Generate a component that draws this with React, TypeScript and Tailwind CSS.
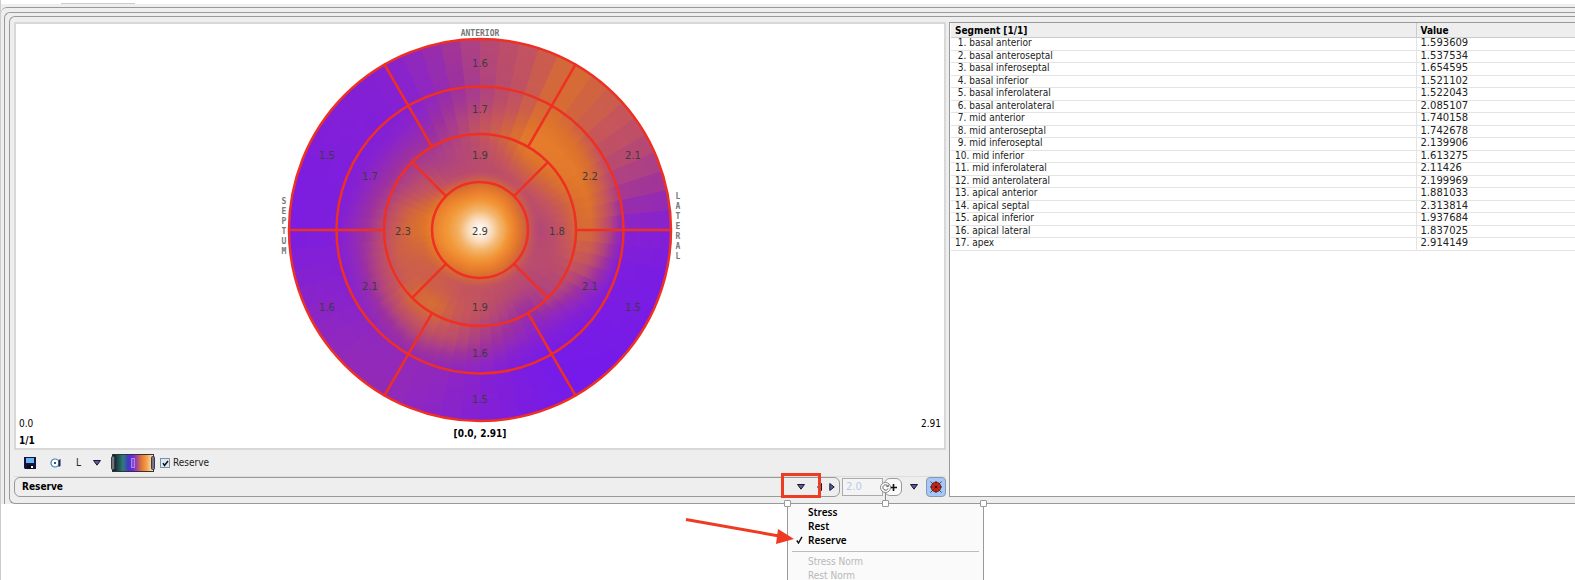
import React, { useState } from 'react';

const SEGMENTS = [
  { name: 'basal anterior', value: '1.593609' },
  { name: 'basal anteroseptal', value: '1.537534' },
  { name: 'basal inferoseptal', value: '1.654595' },
  { name: 'basal inferior', value: '1.521102' },
  { name: 'basal inferolateral', value: '1.522043' },
  { name: 'basal anterolateral', value: '2.085107' },
  { name: 'mid anterior', value: '1.740158' },
  { name: 'mid anteroseptal', value: '1.742678' },
  { name: 'mid inferoseptal', value: '2.139906' },
  { name: 'mid inferior', value: '1.613275' },
  { name: 'mid inferolateral', value: '2.11426' },
  { name: 'mid anterolateral', value: '2.199969' },
  { name: 'apical anterior', value: '1.881033' },
  { name: 'apical septal', value: '2.313814' },
  { name: 'apical inferior', value: '1.937684' },
  { name: 'apical lateral', value: '1.837025' },
  { name: 'apex', value: '2.914149' },
];

// Colour table, from low to high reserve
const PALETTE = [
  [117, 26, 234],
  [132, 32, 212],
  [144, 40, 190],
  [156, 48, 160],
  [172, 64, 134],
  [186, 76, 108],
  [198, 86, 90],
  [208, 100, 64],
  [222, 116, 42],
  [236, 130, 46],
  [242, 152, 56],
  [244, 182, 110],
  [250, 226, 200],
  [255, 255, 255],
];

const RADII = [0, 12, 24, 36, 46, 58, 72, 86, 98, 112, 128, 144, 191];

// Palette index per radius (from 46 outwards), one row every 15 degrees, clockwise from the top
const SAMPLES = [
  [7.6, 5, 5, 5.2, 5.8, 5.2, 4.2, 4, 4.5],
  [7.6, 5, 5.6, 6.4, 7.2, 6.6, 5.8, 5.5, 5.7],
  [7.6, 5.2, 6.5, 7.8, 8.6, 8.5, 8, 7.7, 7.6],
  [7.4, 5.4, 6.8, 7.9, 8.4, 8.5, 7.8, 6.6, 6.5],
  [7, 5, 6.2, 7.4, 8.2, 8.4, 7.4, 5.2, 5],
  [6.8, 4.8, 5.6, 6.6, 7.6, 8, 6.2, 3.5, 3.3],
  [6.8, 4.4, 5, 6.2, 7.4, 7.4, 4.8, 1.2, 0.9],
  [6.8, 4.8, 4.9, 5.6, 6.4, 5.8, 3.2, 0.5, 0.3],
  [7, 5, 4.9, 4.8, 5, 3.4, 1.6, 0.4, 0.2],
  [7.2, 5, 4.6, 4.2, 4, 2.2, 0.8, 0.2, 0],
  [7.4, 5.2, 4.6, 3.2, 2.6, 1.6, 0.7, 0.1, 0],
  [7.6, 5.4, 5, 4.2, 3.4, 2.6, 1.2, 0.5, 0.4],
  [7.6, 5.6, 5.6, 5.4, 4.4, 3.6, 2.4, 1.2, 1],
  [7.8, 5.8, 6, 6.2, 5.8, 5, 3.2, 2, 1.6],
  [7.8, 6.2, 6.6, 7.6, 7.2, 5.8, 3.8, 2.2, 2.2],
  [8.2, 6.6, 6.6, 7.2, 7.2, 5.4, 3, 2, 2.2],
  [8.6, 7, 6.6, 6.4, 5.8, 4.4, 2.4, 1.4, 1.8],
  [8.8, 7.4, 7, 6.6, 5.4, 3.8, 2, 1, 1.2],
  [8.9, 7.9, 7.4, 6.2, 4.8, 3.2, 2, 0.7, 0.4],
  [8.8, 7.8, 7, 5.6, 4, 2.8, 1.4, 0.6, 0.5],
  [8.6, 7, 5.6, 4.4, 3.4, 2.4, 1.2, 0.7, 0.8],
  [8.2, 5.8, 5, 4, 3.4, 2.4, 1.2, 0.8, 0.9],
  [7.6, 5, 4.2, 3.8, 3.2, 2.4, 1.5, 1.1, 1.2],
  [7.4, 4.8, 4.6, 4.4, 4, 3.6, 3, 2.4, 2.6],
].map((row) => [12.9, 11.8, 10.6, (9.8 + row[0]) / 2 + 0.4, ...row]);

const MAP_RADIUS = 191;
const WEDGE = 6;

const mix = (a: number, b: number, t: number) => a + (b - a) * t;

function colorAt(index: number) {
  const i = Math.min(Math.floor(index), PALETTE.length - 2);
  const rgb = PALETTE[i].map((c, k) => Math.round(mix(c, PALETTE[i + 1][k], index - i)));
  return `rgb(${rgb.join(',')})`;
}

function sampleAt(angle: number, radius: number) {
  const a = angle / 15;
  const row = SAMPLES[Math.floor(a) % 24];
  const next = SAMPLES[(Math.floor(a) + 1) % 24];
  let k = 0;
  while (k < RADII.length - 2 && radius > RADII[k + 1]) k++;
  const t = (radius - RADII[k]) / (RADII[k + 1] - RADII[k]);
  const ta = a - Math.floor(a);
  return mix(mix(row[k], row[k + 1], t), mix(next[k], next[k + 1], t), ta);
}

function polar(angle: number, radius: number) {
  const rad = (angle * Math.PI) / 180;
  return [Math.sin(rad) * radius, -Math.cos(rad) * radius];
}

// Each wedge runs a little under the next one, so no seam shows between them
const WEDGES = Array.from({ length: 360 / WEDGE }, (_, i) => {
  const end = i === 360 / WEDGE - 1 ? 360 : (i + 1) * WEDGE + 2;
  const [x1, y1] = polar(i * WEDGE, MAP_RADIUS);
  const [x2, y2] = polar(end, MAP_RADIUS);
  const stops = Array.from({ length: 49 }, (_, s) => {
    const r = (s / 48) * MAP_RADIUS;
    return { offset: s / 48, color: colorAt(sampleAt(i * WEDGE + WEDGE / 2, r)) };
  });
  return { id: `wedge-${i}`, d: `M0 0L${x1} ${y1}A191 191 0 0 1 ${x2} ${y2}Z`, stops };
});

const MAP_LABELS: [number, number, string][] = [
  [0, -167, '1.6'],
  [-153, -75, '1.5'],
  [-153, 77, '1.6'],
  [0, 169, '1.5'],
  [153, 77, '1.5'],
  [153, -75, '2.1'],
  [0, -121, '1.7'],
  [-110, -54, '1.7'],
  [-110, 56, '2.1'],
  [0, 123, '1.6'],
  [110, 56, '2.1'],
  [110, -54, '2.2'],
  [0, -75, '1.9'],
  [-77, 1, '2.3'],
  [0, 77, '1.9'],
  [77, 1, '1.8'],
  [0, 1, '2.9'],
];

function PolarMap() {
  return (
    <svg width="406" height="397" viewBox="-203 -206 406 397" className="block overflow-visible" role="img" aria-label="Polar map">
      <defs>
        {WEDGES.map((w) => (
          <radialGradient key={w.id} id={w.id} gradientUnits="userSpaceOnUse" cx="0" cy="0" r={MAP_RADIUS}>
            {w.stops.map((s) => (
              <stop key={s.offset} offset={s.offset} stopColor={s.color} />
            ))}
          </radialGradient>
        ))}
      </defs>
      {WEDGES.map((w) => (
        <path key={w.id} d={w.d} fill={`url(#${w.id})`} />
      ))}
      <g fill="none" stroke="#ee3023" strokeWidth="2.5">
        {[48, 96, 143.5, 191].map((r) => (
          <circle key={r} r={r} />
        ))}
        {[30, 90, 150, 210, 270, 330].map((angle) => {
          const [x1, y1] = polar(angle, 96);
          const [x2, y2] = polar(angle, 192);
          return <line key={angle} x1={x1} y1={y1} x2={x2} y2={y2} />;
        })}
        {[45, 135, 225, 315].map((angle) => {
          const [x1, y1] = polar(angle, 48);
          const [x2, y2] = polar(angle, 96);
          return <line key={angle} x1={x1} y1={y1} x2={x2} y2={y2} />;
        })}
      </g>
      <g fill="#3c3c3c" fontSize="10" textAnchor="middle" className="font-['DejaVu_Sans',sans-serif]">
        {MAP_LABELS.map(([x, y, text]) => (
          <text key={`${x},${y}`} x={x} y={y + 4}>{text}</text>
        ))}
      </g>
      <g fill="#777" fontSize="8" fontWeight="bold" textAnchor="middle" className="font-['DejaVu_Sans_Mono',monospace]">
        <text x="0" y="-194">ANTERIOR</text>
        {'SEPTUM'.split('').map((c, i) => (
          <text key={i} x="-196" y={-26 + i * 10}>{c}</text>
        ))}
        {'LATERAL'.split('').map((c, i) => (
          <text key={i} x="198" y={-31 + i * 10}>{c}</text>
        ))}
      </g>
    </svg>
  );
}

function SaveIcon() {
  return (
    <svg width="12" height="12" viewBox="0 0 12 12">
      <path d="M0 0H12V12H1L0 11Z" fill="#10143c" />
      <rect x="2" y="1" width="8" height="5" fill="#6cb4f4" />
      <rect x="3" y="8" width="6" height="4" fill="#0a0a18" />
      <rect x="7" y="9" width="2" height="2" fill="#fff" />
    </svg>
  );
}

function ViewIcon() {
  return (
    <svg width="12" height="12" viewBox="0 0 12 12">
      <circle cx="5" cy="6" r="4" fill="#fff" stroke="#3a86bc" strokeWidth="1.2" />
      <circle cx="5" cy="6" r="1" fill="#10143c" />
      <path d="M8.500 3L10.500 2V9L8.500 10Z" fill="#1c2460" />
    </svg>
  );
}

function DownIcon() {
  return (
    <svg width="8" height="6" viewBox="0 0 8 6">
      <path d="M0.500 0.500H7.500L4 5.200Z" fill="#5a5aa0" stroke="#1a1a2c" strokeWidth="1" />
    </svg>
  );
}

function BugIcon() {
  return (
    <svg width="12" height="12" viewBox="-6 -6 12 12">
      <path d="M-5.500 -5.500L5.500 5.500M5.500 -5.500L-5.500 5.500M-6 0H6M0 -6V6" stroke="#3a1010" strokeWidth="0.800" />
      <circle r="4.800" fill="#e02818" stroke="#5a1410" strokeWidth="0.900" />
      <path d="M-3.200 -3.200L3.200 3.200M3.200 -3.200L-3.200 3.200M-4.500 0H4.500M0 -4.500V4.500" stroke="#5a1410" strokeWidth="0.600" />
      <circle r="1" fill="#2a0808" />
    </svg>
  );
}

function ColorTable() {
  return (
    <svg width="44" height="18" viewBox="0 0 44 18" role="img" aria-label="Color table">
      <defs>
        <linearGradient id="lut">
          <stop offset="0" stopColor="#04100e" />
          <stop offset="0.120" stopColor="#1c4844" />
          <stop offset="0.260" stopColor="#2e7c7c" />
          <stop offset="0.380" stopColor="#4438c0" />
          <stop offset="0.500" stopColor="#7424ec" />
          <stop offset="0.600" stopColor="#a84890" />
          <stop offset="0.720" stopColor="#e47c30" />
          <stop offset="0.840" stopColor="#f4a44c" />
          <stop offset="1" stopColor="#fff0d8" />
        </linearGradient>
      </defs>
      <rect x="1.500" y="0.500" width="41" height="17" fill="url(#lut)" stroke="#333" />
      <g fill="#747488" stroke="#3a3a4a">
        <rect x="0.500" y="2.500" width="3" height="13" rx="1" />
        <rect x="40.500" y="2.500" width="3" height="13" rx="1" />
        <rect x="20.500" y="4.500" width="3" height="9" fill="#7c50d8" stroke="#a488dc" />
      </g>
    </svg>
  );
}

function Handle({ className }: { className: string }) {
  return <span className={`absolute h-[7px] w-[7px] rounded-[1px] border border-[#999] bg-white ${className}`} />;
}

const MENU_ITEMS = ['Stress', 'Rest', 'Reserve'];
const NORM_ITEMS = ['Stress Norm', 'Rest Norm'];

function SeriesMenu({ selected, onSelect }: { selected: string; onSelect: (item: string) => void }) {
  return (
    <div className="absolute top-[26px] -right-[38px] z-10 h-32 w-[197px] border border-[#999] bg-[#fafafa] pt-px" role="menu">
      <Handle className="-top-1 -left-1" />
      <Handle className="-top-1 left-[94px]" />
      <Handle className="-top-1 -right-1" />
      <span className="absolute -top-4 left-[97px] h-3 w-px bg-[#888]" />
      <span className="absolute -top-[22px] left-[92px] flex h-[11px] w-[11px] items-center justify-center rounded-full border border-[#888] bg-white">
        <svg width="7" height="7" viewBox="0 0 6 6" fill="none" stroke="#555" strokeWidth="0.800">
          <path d="M5 1.800A2.300 2.300 0 1 0 5.200 3.800M5.400 0.600V2.200H3.800" />
        </svg>
      </span>
      {MENU_ITEMS.map((item) => (
        <button
          key={item}
          role="menuitemradio"
          aria-checked={item === selected}
          onClick={() => onSelect(item)}
          className="flex h-[14px] w-full items-center pl-2 text-left font-['Noto_Sans',sans-serif] font-semibold text-black"
        >
          <span className="w-3">
            {item === selected && (
              <svg width="7" height="8" viewBox="0 0 7 8" fill="none" stroke="#111" strokeWidth="1.400">
                <path d="M0.800 4.500L2.500 7L6 0.800" />
              </svg>
            )}
          </span>
          {item}
        </button>
      ))}
      <hr className="mx-1 mt-1 mb-[3px] border-[#bbb]" />
      {NORM_ITEMS.map((item) => (
        <button key={item} role="menuitem" disabled className="block h-[14px] w-full pl-5 text-left leading-[14px] text-[#b8b8b8]">
          {item}
        </button>
      ))}
    </div>
  );
}

export default function App() {
  const [showReserve, setShowReserve] = useState(true);
  const [series, setSeries] = useState('Reserve');

  return (
    <div className="min-h-screen overflow-hidden border-l border-[#ccc] bg-white font-['DejaVu_Sans_Condensed','DejaVu_Sans',sans-serif] text-[10px] leading-4 text-[#222]">
      <div className="ml-[60px] h-1 w-[74px] border-b border-[#ccc]" />
      <div className="bg-[#eee] pt-[3px]">
        <div className="rounded-tl-md border-t border-[#999] pt-1 pl-[3px]">
          <div className="rounded-tl-md border-t border-l border-[#999] pt-[3px] pl-1">
            <div className="rounded-l-md border-y border-l border-[#999] pt-[5px] pb-[6px] pl-1">
              <div className="grid grid-cols-[minmax(0,932fr)_minmax(0,626fr)] gap-[3px]">
                <div>
                  <div className="grid grid-cols-[1fr_auto_1fr] items-end border-2 border-[#d8d8d8] bg-white px-[3px]">
                    <div className="text-black">
                      <div className="pb-[2px]">0.0</div>
                      <div className="leading-[14px] font-bold">1/1</div>
                    </div>
                    <div>
                      <PolarMap />
                      <div className="pt-[5px] pb-[6px] text-center font-bold text-black">[0.0, 2.91]</div>
                    </div>
                    <div className="pb-4 text-right text-black">2.91</div>
                  </div>

                  <div className="flex h-[27px] items-center border-b border-[#ddd] pl-[10px]">
                    <button aria-label="Save"><SaveIcon /></button>
                    <button aria-label="View" className="ml-[14px]"><ViewIcon /></button>
                    <button className="ml-[14px]">L</button>
                    <button aria-label="Layout options" className="ml-3"><DownIcon /></button>
                    <div className="ml-[10px]"><ColorTable /></div>
                    <label className="ml-[5px] flex items-center gap-[3px]">
                      <span className="relative flex h-[10px] w-[10px] items-center justify-center">
                        <input
                          type="checkbox"
                          checked={showReserve}
                          onChange={(e) => setShowReserve(e.target.checked)}
                          className="h-[10px] w-[10px] appearance-none border border-[#7890a8] bg-[#dce8f4]"
                        />
                        {showReserve && (
                          <svg width="7" height="7" viewBox="0 0 7 7" fill="none" stroke="#111" strokeWidth="1.500" className="pointer-events-none absolute">
                            <path d="M1 3.200L2.500 5.500L6 1" />
                          </svg>
                        )}
                      </span>
                      Reserve
                    </label>
                  </div>

                  <div className="relative flex h-5 items-stretch">
                    <div className="flex flex-1 items-center rounded-md border border-[#999] pr-1 pl-[7px]">
                      <span className="flex-1 font-bold text-black">{series}</span>
                      <button aria-label="Select series"><DownIcon /></button>
                      <button aria-label="Previous" className="ml-3">
                        <svg width="5" height="8" viewBox="0 0 5 8"><path d="M4.500 0.500V7.500L0.500 4Z" fill="#5a5aa0" stroke="#1a1a2c" /></svg>
                      </button>
                      <button aria-label="Next" className="ml-[7px]">
                        <svg width="6" height="8" viewBox="0 0 6 8"><path d="M0.800 0.500V7.500L5.200 4Z" fill="#5a5aa0" stroke="#1a1a2c" /></svg>
                      </button>
                    </div>
                    <input
                      aria-label="Threshold"
                      defaultValue="2.0"
                      disabled
                      className="my-px ml-[2px] w-[41px] border border-[#aaa] bg-[#f4f4f4] px-[3px] font-['DejaVu_Sans',sans-serif] text-[#b4cce8]"
                    />
                    <button aria-label="Add" className="my-px ml-px flex w-[18px] items-center justify-center rounded-md border border-[#999] bg-[#fafafa]">
                      <svg width="7" height="7" viewBox="0 0 7 7"><path d="M3.500 0V7M0 3.500H7" stroke="#111" strokeWidth="1.600" /></svg>
                    </button>
                    <button aria-label="More" className="ml-2"><DownIcon /></button>
                    <button aria-label="Polar map overlay" className="ml-2 flex w-5 items-center justify-center rounded-sm border border-[#8899b0] bg-[#a4c8f8]">
                      <BugIcon />
                    </button>

                    {/* callouts over the controls */}
                    <div className="pointer-events-none absolute -top-1 right-[125px] h-[25px] w-[40px] border-3 border-[#ee3b24]" />
                    <svg width="110" height="32" viewBox="0 0 110 32" className="absolute top-10 right-[151px] z-20">
                      <path d="M1 2.500L94 19" stroke="#ee3b24" strokeWidth="3" />
                      <path d="M93 12L109 22L91 27Z" fill="#ee3b24" />
                    </svg>
                    <SeriesMenu selected={series} onSelect={setSeries} />
                  </div>
                </div>

                <div className="border border-r-0 border-[#999] bg-white pl-px">
                  <table className="w-full table-fixed border-collapse leading-3">
                    <thead className="bg-[#eee] text-black">
                      <tr className="h-[14px]">
                        <th className="w-[465px] border-b border-[#ccc] pt-[2px] pl-1 text-left leading-[11px] font-bold">Segment [1/1]</th>
                        <th className="border-b border-l border-[#ccc] pt-[2px] pl-1 text-left leading-[11px] font-bold">Value</th>
                      </tr>
                    </thead>
                    <tbody>
                      {SEGMENTS.map((s, i) => (
                        <tr key={s.name} className="h-3 border-b border-[#e4e4e4] odd:h-[13px]">
                          <td className="pl-1 align-top leading-[10px]">
                            {i < 9 ? '\u00a0' : ''}{i + 1}. {s.name}
                          </td>
                          <td className="border-l border-[#e4e4e4] pl-1 align-top font-['DejaVu_Sans',sans-serif] leading-[10px]">{s.value}</td>
                        </tr>
                      ))}
                    </tbody>
                  </table>
                </div>
              </div>
            </div>
          </div>
        </div>
      </div>
    </div>
  );
}
